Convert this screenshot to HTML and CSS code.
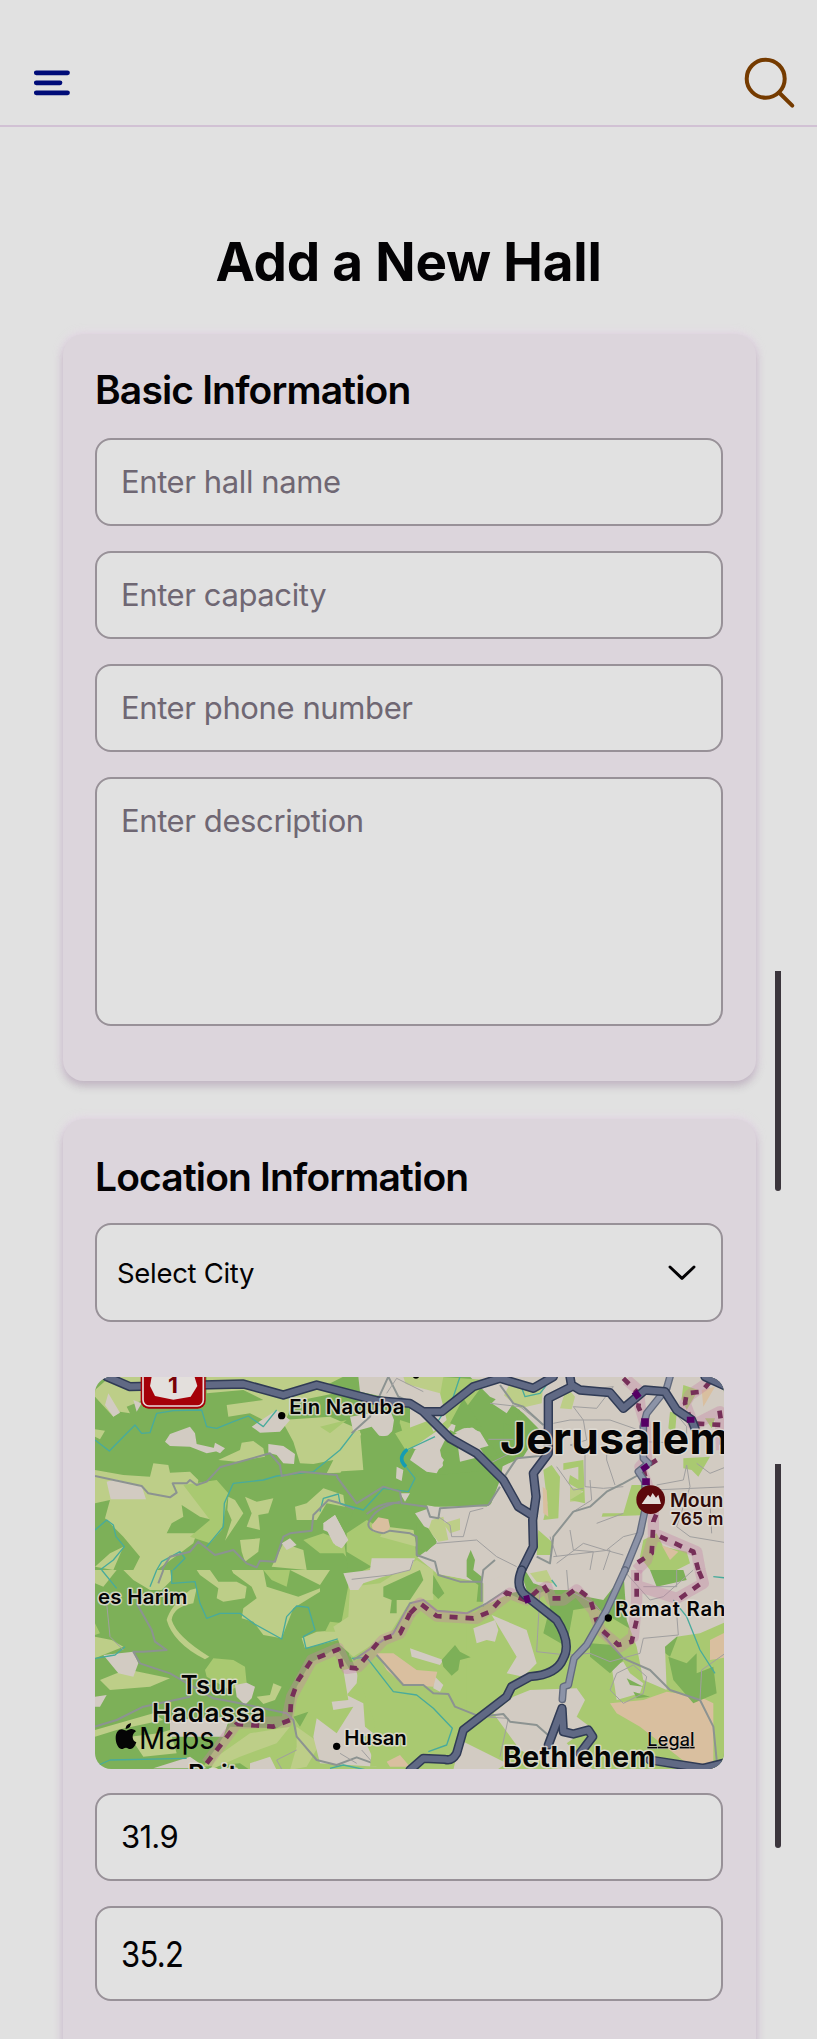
FILE: index.html
```html
<!DOCTYPE html>
<html lang="en">
<head>
<meta charset="utf-8">
<title>Add a New Hall</title>
<link rel="stylesheet" href="styles.css">
</head>
<body>
<div class="screen">
  <header class="topbar">
    <svg class="menu-icon" viewBox="0 0 36 26"><path d="M2.3 2.8H33.5M2.3 12.8H26M2.3 22.8H33.5"/></svg>
    <svg class="search-icon" viewBox="0 0 50 50"><circle cx="20.7" cy="20.7" r="19"/><path d="M34 34.5L47.3 47.6"/></svg>
  </header>
  <main class="content">
    <h1 class="title">Add a New Hall</h1>
    <section class="card basic">
      <h2 class="heading">Basic Information</h2>
      <div class="field"><span class="placeholder">Enter hall name</span></div>
      <div class="field"><span class="placeholder">Enter capacity</span></div>
      <div class="field"><span class="placeholder">Enter phone number</span></div>
      <div class="field area"><span class="placeholder">Enter description</span></div>
    </section>
    <section class="card location">
      <h2 class="heading">Location Information</h2>
      <div class="field select"><span>Select City</span>
        <svg class="chevron" viewBox="0 0 28 16"><path d="M2 2L14 13.4L26 2"/></svg>
      </div>
      <svg class="map" viewBox="15 21 1887 1176" preserveAspectRatio="none">
        <rect class="forest" x="0" y="0" width="1920" height="1220"/>
        <!-- north-west -->
        <g>
          <path class="pale" d="M350 20H700L735 70L610 95L575 180L520 150L480 130L415 140L410 105L520 90L460 60L350 70ZM15 60L60 20H160V90L110 110L120 130L90 125L70 140L15 80ZM15 178L45 182L30 208L15 200ZM575 150L720 140L800 175L820 200L805 250L820 305L710 310L730 270L670 282L630 280L610 215ZM385 270L450 240L455 218L490 213L520 235L525 260L440 275ZM15 300L100 315L180 320L190 280L235 285L240 308L300 305L325 330L320 370L360 410L368 450L330 440L275 405L280 440L245 460L230 490L320 490L310 520L270 550L200 600H130L150 560L100 500L45 445L60 390L15 400ZM415 380L435 390L460 430L430 475L405 512L425 450L412 420ZM465 380L500 395L550 385L535 430L505 435L510 480L470 470L485 430ZM615 410L650 400L700 355L760 375L765 410L710 400L680 450L620 450ZM450 510L510 505L505 545L465 575L455 545ZM545 590L580 520L640 540L650 600ZM15 590L60 550L100 530L70 600Z"/>
          <path class="mid" d="M280 345L380 330L415 370L395 480L360 520L300 500L360 450ZM640 510L700 490L800 530L900 480L960 520V600H800L760 550L690 550ZM930 150L960 160V220L925 210ZM690 170L770 150L720 190Z"/>
          <path class="land" d="M55 70L90 128L70 140L45 105ZM225 215L240 192L300 170L315 190L320 222L400 240L350 250L300 230L240 228ZM375 218L405 235L390 250L370 240ZM535 222L580 228L615 252L612 282L580 280L560 255L535 248ZM805 20H960V115L880 80L810 65ZM780 140L900 120L912 150L905 195L870 200L845 170L790 185ZM50 335L75 328L155 348L168 388L62 388ZM485 170L560 120L600 150L570 185L510 188ZM700 460L735 435L775 510L755 535L735 525L725 490L700 480ZM575 520L600 505L620 525L590 540ZM130 90L155 100L140 125ZM920 290L940 280V325L920 330Z"/>
          <path class="pale" d="M640 20H760L700 50Z"/>
          <path class="stream" d="M15 210L58 243L100 200L135 165L155 190L180 188L200 130L250 122L335 120L350 170L380 175L430 155L475 138L520 170L560 120M350 530L400 470L403 400L430 340L520 330L560 318L670 305L750 240L795 182M15 480L50 450L70 465L78 500L103 530L70 570L30 600M200 600L215 575L270 545L285 565L250 600M690 425L700 385L745 372L750 400"/>
          <path class="lane" d="M15 318L155 348L175 370L240 382L260 368L248 340L290 340L300 330L320 345L350 335L390 292L540 250L570 285L575 318L635 305L740 315L760 350L810 400M215 600L240 560L300 545L325 515L375 555L430 540L470 580L500 592L510 572L555 575L580 500L600 490L665 482L670 435L715 390L750 400L830 432M785 190L840 140L895 20L925 80L960 95"/>
        </g>
        <!-- south-west -->
        <g transform="translate(0 600)">
          <path class="pale" d="M15 0H80L40 50L15 40ZM100 0H240L245 30L215 60L180 60L130 30ZM320 0H360L385 35L440 35L470 50L465 85L400 95L380 85L385 55L330 15ZM425 0H520L530 50L625 80L690 55L690 65L610 115L575 205L520 195L490 155L455 145L460 115L500 85L485 50L430 10ZM600 0H720L690 45ZM230 150Q240 110 300 60L320 55L310 100Q250 110 245 150Q260 200 358 260L345 268Q250 220 230 150ZM15 200L65 210L100 230L15 265ZM30 330L80 310L120 300L240 325L180 350L60 360ZM500 380L540 375L550 340L575 350L555 390L520 402ZM780 0L900 20L880 60L870 110L900 135L870 190L840 220L780 260L765 205L645 235L635 205L680 185L750 180L785 120ZM15 480L190 430L220 450L80 480L15 500ZM205 490L240 480L260 550L160 560L120 500Z"/>
          <path class="mid" d="M660 280L740 235L780 300L840 260L900 330L960 370V600H480L450 580L340 590L420 470L560 475L605 450L620 350ZM345 300L370 265L430 270L465 290L470 340L420 360L350 320ZM520 0H600L590 50L545 30ZM15 160L30 190L15 195ZM720 155L760 160L740 185L705 185Z"/>
          <path class="pale" d="M380 560L480 490L600 470L560 520L450 560L360 600ZM620 470L690 520L650 590L600 600L620 530Z"/>
          <path class="forest" d="M610 440L655 425L630 470ZM300 530L350 500L370 520L330 550Z"/>
          <path class="land" d="M40 255L130 245L145 280L130 320L85 310ZM435 345L470 338L495 350L485 385L465 405L440 380ZM760 300L805 290L800 340L770 375L820 400L825 470L850 490L820 500L860 590L690 580L670 500L680 445L740 490L790 410L730 420L725 395L775 390ZM15 380L50 375L30 410L15 410ZM240 450L420 440L400 500L240 500ZM190 595L300 560L350 595ZM480 580L540 560L560 600H480Z"/>
          <path class="stream" d="M245 0V40L315 35L330 100L350 145L390 130L450 130L490 160L575 207L590 140L620 108L655 112L675 180L640 200L648 235L700 220L765 200L785 262M15 265L75 255L105 230M35 0L80 55M15 590L60 570L290 565M720 595L760 585L830 600M200 0L180 50"/>
          <path class="lane" d="M220 0L205 40M140 100L185 180L195 215L230 240L160 245L130 245L150 280L240 310L370 385L450 400L590 430L610 450L620 500L680 570L740 585L800 562L850 580L920 550L960 570M15 470L80 450L160 410L300 380"/>
          <path class="street" d="M50 100L60 200L100 240M750 550L800 580M815 540L850 580M560 570L620 540M560 570L575 597"/>
        </g>
        <!-- north-east ground -->
        <g transform="translate(960 0)">
          <path class="land" d="M0 20H960V600H0V420L75 400L230 410L270 370L275 290L340 260L390 180L340 130L290 90L250 120L160 200L120 180L90 240L100 290L60 310L30 290L40 250L0 230Z"/>
          <path class="forest" d="M85 20L180 20L240 80L330 120L315 170L280 160L280 250L200 260L280 275L265 370L250 400L75 410L30 400L0 430V270L20 290L45 305L90 300L110 270L95 250L130 245L190 250L210 190L170 170L130 190L150 120L100 110Z"/>
          <path class="pale" d="M300 40H400L395 100L330 115L280 80ZM470 50L495 80L485 118L450 115ZM480 350L515 360V392L480 395Z"/>
          <path class="land" d="M130 195L185 170L210 190L240 240L200 260L155 240ZM245 100L275 70L310 100L290 130ZM0 20H85L105 90L60 130L0 100Z"/>
          <path class="mid" d="M400 300L425 285L450 320L445 445L400 450L412 400ZM460 280L520 270L525 400L480 390L520 365L475 340L480 315L505 330L505 290L460 300ZM665 345L715 345L710 435L575 440L578 430L640 430ZM820 265L900 260L865 320L845 300L820 295ZM780 125L800 130L795 190L775 175ZM385 480L430 520L420 555L380 555ZM700 510L740 490L760 530L830 545L840 580L800 600H720L690 560ZM820 45L865 60L830 120L815 85ZM305 560H320V600H300ZM885 145L915 145L905 175Z"/>
          <path class="peach" d="M398 350L410 360L415 440L400 430ZM755 525L805 545L780 570ZM875 60L915 50L880 110Z"/>
        </g>
        <!-- south-east ground -->
        <g transform="translate(960 600)">
          <path class="mid" d="M0 80L90 110H220L270 60L340 90L410 60L420 110L400 190L470 230L490 120L550 110L700 200L780 260L830 130L960 110V600H0Z"/>
          <path class="land" d="M75 0H330L350 60L300 70L260 90L215 110L180 115L75 100L60 80V0ZM345 0H650L580 90L530 80L490 60L430 60L370 40ZM640 0H960V150L870 190L800 200L765 230L770 360L700 330L680 230L650 150ZM245 135L350 180L380 280L340 320L290 310L320 260ZM310 380L360 360L500 355L525 390L500 440L540 470L470 520L550 600H450L330 540L250 430ZM605 290L640 275L660 310L700 340L690 370L620 390ZM150 510L230 550L290 580L260 600H130Z"/>
          <path class="peach" d="M600 400L700 390L770 365L870 380L910 400V600L830 580L690 470L620 430ZM900 210L960 180V260L900 270Z"/>
          <path class="forest" d="M720 0H820L830 30L740 50ZM775 260L830 280L860 250L860 310L910 290L920 370L850 400L790 330ZM540 220L610 225L640 270L600 310L540 260ZM650 325L700 350L660 345ZM670 365L720 380L680 385Z"/>
          <path class="pale" d="M360 10L410 0L430 40L380 35Z"/>
        </g>
        <!-- valley between the forest and the city -->
        <g transform="translate(630 0)">
          <path class="forest" d="M185 190L260 200L300 160L320 230L350 320L580 300L595 370L570 405L420 412L380 405L410 520L300 600L150 640L130 500L170 400L110 330Z"/>
          <path class="mid" d="M285 190L390 150L415 180L320 245ZM140 490L200 450L270 490L340 480L350 560L410 610L550 640V700L500 745V1020L450 1180L330 1190H210L225 1060L160 880L120 780L150 620L215 590L140 545ZM390 125L415 20L560 30L500 110L440 180Z"/>
          <path class="pale" d="M150 650L240 640L350 570L400 600V690L360 690L320 710L270 790L160 860L120 825L100 770L145 740ZM260 470L340 480L350 530L240 500ZM100 305L190 300L180 180L130 240ZM310 20H430L420 75L330 85Z"/>
          <path class="land" d="M345 240L400 232L432 270L410 310L380 305L330 270ZM290 290L310 300L305 333L288 325ZM130 610L210 600L215 565L345 565L330 600L250 620L190 640L175 660H150ZM345 430L400 410H570L600 330L690 450L650 600L555 637L410 612L405 575L375 550L420 520L380 480ZM70 460L105 435L145 510L125 535L100 520ZM300 370L330 370L315 395ZM330 835L430 870L420 885L335 860ZM520 775L585 750L595 780L585 815L560 810L530 820ZM555 640L650 600L630 665L560 695ZM325 85L310 40L420 70L440 150L400 185L380 130ZM400 915L430 945L420 965L400 955ZM470 200L500 172L540 185L570 235L540 260L480 275Z"/>
          <path class="pale" d="M395 450L430 440L445 510L415 515L385 480ZM430 460L480 445V480L450 490Z"/>
          <path class="forest" d="M350 460L385 475L410 515L380 545L350 535ZM250 650L360 600L370 630L330 690H290V730H270L275 690L250 680ZM400 615L433 670L415 687L398 670ZM500 570L512 540L525 570L520 600L545 620V695H530L535 645L500 620ZM425 870L465 825L480 845L512 862L480 870L475 900L455 917L430 890ZM450 160L490 85L545 170L490 175ZM540 235L575 225L595 255L560 265Z"/>
          <path class="peach" d="M215 465L235 442L265 448L270 470L260 490L220 485ZM230 850H280L350 900L412 905L400 950L310 945L260 900ZM260 1175L300 1155L330 1190H270Z"/>
          <path class="street" d="M155 628L270 615L330 600L340 570M415 440L450 465L455 500L490 500L510 425L550 415M410 520L530 510L590 560L650 590M260 70L290 25L370 65M540 1040L625 1045L600 1160M565 208H640"/>
          <path class="stream" d="M405 200L320 240M310 280L345 325L325 365L250 355L190 420L120 400M155 865L200 862L280 965L350 975L400 1015L457 1075L440 1125L385 1145M480 20L460 80L410 160L430 180"/>
          <path class="river" d="M322 238Q290 265 318 290"/>
          <path class="lane" d="M110 320L170 400L250 350L300 365L305 400L380 410L390 440L415 445L420 415L565 405L600 350M200 432Q250 390 300 400M250 490Q190 480 210 450Q230 410 300 395M250 490L270 482L330 490L350 500V555L405 575L415 615L480 635H545L550 600L585 570M545 635V695M160 870L280 790L330 700L370 690L410 722L500 730L560 700L620 660M230 855L310 945H370L400 970L445 972L465 1010L540 1040"/>
        </g>
        <!-- regional boundary -->
        <g transform="translate(0 600)">
          <path class="boundary-bg" d="M350 580L440 460L590 455L605 380L665 270L745 235L770 295L805 290L880 210L930 190L960 130"/>
          <path class="boundary" d="M350 580L440 462L550 470L600 450L603 390L625 330L665 270L745 238L755 290L800 295L870 210L930 190L960 130"/>
        </g>
        <!-- north-east roads -->
        <g transform="translate(960 0)">
          <path class="stream" d="M330 40L345 80L390 70L430 20"/>
          <path class="street" d="M240 100L330 110L400 165M520 60L610 50L560 115L490 110L520 150L530 210L480 225L525 240V350L580 355L640 350M430 160L480 150L600 150L700 185M590 230V270L615 345M440 290L490 360L520 355M540 330L545 390L490 425M740 345L820 330L830 285L840 350L800 470L840 500L960 520M860 280L900 310L950 290M560 460L640 430M590 540L640 500L680 490M580 600L600 540L430 560M480 480L490 540L550 545L540 600M780 110L830 170V220L700 215M300 250L220 290M440 580L520 520L585 540L640 555M730 360L960 350M900 400L905 490M420 500L440 560"/>
          <path class="lane" d="M270 45L310 100L340 110L400 165M420 255L320 265L270 340M685 315L640 340L590 365L540 410L490 425L430 500L420 580L380 560"/>
          <path class="boundary-bg" d="M650 30L685 60L690 110L705 160L710 270L690 290L710 340L730 410V490L860 545L870 600M735 485L710 570L680 600M890 40L840 75L825 100L850 165L930 125L935 240"/>
          <path class="boundary" d="M640 25L690 75L685 110L705 155L708 215M740 270L700 295L710 340L740 430L730 455L728 500L725 550L680 580V600M750 500L850 545L865 600M900 35L875 65L830 70L825 100L845 160L935 165L925 100M935 200V250"/>
          <path class="minor-case" d="M780 20L770 55L710 130L700 170V265L715 280L685 305L705 335V420L690 490L645 600"/>
          <path class="minor" d="M780 20L770 55L710 130L700 170V265L715 280L685 305L705 335V420L690 490L645 600"/>
          <path class="major-case" d="M-910 20L-840 50L-500 42L-380 75L-280 45L-100 92L0 100L40 125L95 125L190 50L270 25L370 55L430 20M40 125L120 205L200 250L280 330L325 410L370 438M480 20L485 50L415 85V250L370 310L378 380L368 450L370 530L335 600M485 45L510 60L600 68L640 115L705 60L765 65L800 120L845 150L855 175M885 20L950 50"/>
          <path class="major" d="M-910 20L-840 50L-500 42L-380 75L-280 45L-100 92L0 100L40 125L95 125L190 50L270 25L370 55L430 20M40 125L120 205L200 250L280 330L325 410L370 438M480 20L485 50L415 85V250L370 310L378 380L368 450L370 530L335 600M485 45L510 60L600 68L640 115L705 60L765 65L800 120L845 150L855 175M885 20L950 50"/>
          <path class="crossing" d="M672 80L688 68M705 145V170M700 285L710 300M708 325V345M842 140V158"/>
        </g>
        <!-- south-east roads -->
        <g transform="translate(960 600)">
          <path class="lane" d="M575 190L640 265L720 300L780 360L870 390L910 470L920 570M210 440L280 432L300 455L380 465L420 500"/>
          <path class="street" d="M390 60L380 245L470 255L540 250L600 275L690 250L700 205L805 195L800 130M870 390L875 300L960 240M800 0V50L700 50M470 0L475 60L550 100L600 150M640 0L720 90L760 80L850 0M620 310L600 360L640 400L700 370L710 320L670 285L620 310"/>
          <path class="stream" d="M790 90L830 140L870 240L915 310M910 20L960 25M425 30L440 50"/>
          <path class="boundary-bg" d="M0 130L30 100L80 138L200 145L300 70L350 90L410 50L425 90H460L500 60L550 120L570 180L630 230L670 200L680 90V0M690 50L800 85L880 40L870 0"/>
          <path class="boundary" d="M0 130L30 100L80 138L190 145L240 125L290 68L350 92L400 45L425 85H460L500 55L540 85L565 170L625 225L665 215L680 150V0M810 85L880 35L865 0"/>
          <path class="minor-case" d="M645 0L590 120L530 225L492 265L475 345L460 350L457 388"/>
          <path class="minor" d="M645 0L590 120L530 225L492 265L475 345L460 350L457 388"/>
          <path class="major-case" d="M335 0Q315 50 345 75L440 150Q485 220 460 265Q440 315 360 320L305 350L290 380L160 480L140 550Q125 575 105 568L40 565L0 600M415 525L456 415L460 485L490 492L535 480L548 500L510 550M720 570L880 595L960 575"/>
          <path class="major" d="M335 0Q315 50 345 75L440 150Q485 220 460 265Q440 315 360 320L305 350L290 380L160 480L140 550Q125 575 105 568L40 565L0 600M415 525L456 415L460 485L490 492L535 480L548 500L510 550M720 570L880 595L960 575"/>
          <path class="crossing" d="M343 90L360 85"/>
        </g>
        <rect class="shield-edge" x="152" y="-60" width="195" height="176" rx="24"/>
        <rect class="shield" x="159" y="-55" width="181" height="163" rx="18"/>
        <path class="shield-face" d="M186 15H312L322 48L302 80L250 89L195 78L180 48Z"/>
        <circle class="peak" cx="1682" cy="389" r="43"/>
        <path class="summit" d="M1655 402L1674 374L1681 382L1688 369L1698 383L1705 374L1713 402Z"/>
        <g class="labels">
          <text class="route" x="234" y="70" textLength="30" lengthAdjust="spacingAndGlyphs">1</text>
          <circle cx="575" cy="137" r="11"/><circle cx="740" cy="1129" r="11"/><circle cx="1555" cy="744" r="11"/><circle cx="978" cy="16" r="10"/>
          <text class="town" x="598" y="133" textLength="345">Ein Naquba</text>
          <text class="town" x="24" y="701" textLength="268">es Harim</text>
          <text class="village" x="272" y="973" textLength="168">Tsur</text>
          <text class="village" x="186" y="1057" textLength="340">Hadassa</text>
          <text class="town" x="763" y="1125" textLength="187">Husan</text>
          <text class="town" x="1575" y="738" textLength="331">Ramat Rah</text>
          <text class="city" x="1230" y="251" textLength="690">Jerusalem</text>
          <text class="bethlehem" x="1239" y="1191" textLength="457">Bethlehem</text>
          <text class="village" x="294" y="1240" textLength="148">Beit</text>
          <text class="mount" x="1740" y="411" textLength="160">Moun</text>
          <text class="mount height" x="1742" y="464" textLength="158">765 m</text>
          <text class="legal" x="1672" y="1127" textLength="142">Legal</text>
          <text class="brand" x="147" y="1136" textLength="227" lengthAdjust="spacingAndGlyphs">Maps</text>
        </g>
        <path class="apple" d="M109 1082C114 1082 120 1075 128 1078Q136 1080 138 1084Q127 1091 128 1102Q129 1114 139 1117Q133 1136 121 1137C115 1137 113 1133 108 1133C102 1133 100 1137 94 1137C84 1136 77 1118 77 1104C77 1087 86 1078 95 1078C101 1078 104 1082 109 1082ZM107 1077Q106 1064 123 1059Q124 1074 107 1077Z"/>
      </svg>
      <div class="field value">31.9</div>
      <div class="field value tall"><span>35.2</span></div>
    </section>
  </main>
  <i class="scroll outer"></i>
  <i class="scroll inner"></i>
</div>
</body>
</html>
```
FILE: styles.css
```css
* { box-sizing: border-box; }
body { margin: 0; background: #e1e1e1; }
.screen {
  position: relative;
  width: 817px;
  height: 2039px;
  overflow: hidden;
  background: #e1e1e1;
  color: #030204;
  font-family: Inter, "Liberation Sans", sans-serif;
}
.topbar {
  display: flex;
  justify-content: space-between;
  align-items: flex-start;
  height: 127px;
  padding: 58px 22px 0 34px;
  border-bottom: 2px solid #d1c1d4;
}
.menu-icon { width: 36px; height: 26px; margin-top: 12px; fill: none; stroke: #000c78; stroke-width: 4.8; stroke-linecap: round; overflow: visible; }
.search-icon { width: 50px; height: 50px; fill: none; stroke: #753b00; stroke-width: 4; stroke-linecap: round; overflow: visible; }
.content { padding: 0 61px 0 63px; }
.title {
  height: 207px;
  margin: 0;
  padding: 103px 2px 0 0;
  font-size: 53px;
  line-height: 64px;
  font-weight: 700;
  letter-spacing: -.2px;
  text-align: center;
  white-space: nowrap;
}
.card {
  width: 693px;
  padding: 30px 33px 0 32px;
  border-radius: 21px;
  background: #dcd5dc;
  box-shadow: 0 5px 9px rgba(83, 62, 88, .25), 0 0 8px 2px rgba(231, 215, 232, .8);
}
.basic { height: 747px; margin-bottom: 38px; }
.location { height: 950px; padding-top: 32px; }
.heading {
  height: 74px;
  margin: 0;
  padding: 3px 0 0;
  font-size: 39px;
  line-height: 46px;
  font-weight: 600;
  letter-spacing: -.85px;
  white-space: nowrap;
}
.field {
  display: flex;
  align-items: center;
  width: 628px;
  height: 88px;
  margin-bottom: 25px;
  padding-left: 24px;
  border: 2px solid #989198;
  border-radius: 16px;
  background: #e1e1e1;
  font-size: 31px;
  line-height: 38px;
  white-space: nowrap;
}
.placeholder { color: #6f6773; letter-spacing: -.4px; }
.area { height: 249px; align-items: flex-start; padding-top: 23px; }
.select { justify-content: space-between; height: 99px; margin-top: -2px; margin-bottom: 55px; padding: 0 25px 0 20px; font-size: 27.5px; letter-spacing: -.3px; }
.chevron { width: 28px; height: 16px; fill: none; stroke: #030204; stroke-width: 2.9; stroke-linecap: round; stroke-linejoin: round; }
.map { display: block; width: 629px; height: 392px; margin-bottom: 24px; border-radius: 16px; overflow: hidden; }
.value { letter-spacing: -.7px; }
.tall { height: 95px; }
.tall span { transform: scaleY(1.16); }
.scroll { position: absolute; left: 775px; width: 6px; background: #3b353c; border-radius: 0 0 3px 3px; }
.outer { top: 971px; height: 220px; }
.inner { top: 1464px; height: 384px; }

.forest { fill: #7db058; }
.mid { fill: #a9c971; }
.pale { fill: #bdce88; }
.land { fill: #d2cbc2; }
.peach { fill: #d9bf9f; }
.stream, .river, .lane, .street, .boundary, .boundary-bg, .major, .major-case, .minor, .minor-case, .crossing { fill: none; stroke-linejoin: round; }
.stream { stroke: #48ab9c; stroke-width: 4; }
.river { stroke: #159db2; stroke-width: 11; }
.lane { stroke: #8c9391; stroke-width: 6; }
.street { stroke: #a09f9f; stroke-width: 3; }
.boundary-bg { stroke: rgba(199, 129, 166, .35); stroke-width: 34; }
.boundary { stroke: #762f58; stroke-width: 14; stroke-dasharray: 24 24; }
.crossing { stroke: #550064; stroke-width: 23; }
.major, .major-case, .minor, .minor-case { stroke-linecap: round; }
.major-case { stroke: #303b55; stroke-width: 28; }
.major { stroke: #606984; stroke-width: 19; }
.minor-case { stroke: #626a7d; stroke-width: 23; }
.minor { stroke: #8c93a7; stroke-width: 15; }
.shield-edge { fill: #a50008; }
.shield { fill: #a50008; stroke: #e7dada; stroke-width: 5; }
.shield-face { fill: #e3dfdc; }
.peak { fill: #5d080c; }
.summit { fill: #e2dcd9; }
.labels text { fill: #050505; stroke: rgba(225, 221, 214, .85); stroke-width: 9px; stroke-linejoin: round; paint-order: stroke; }
.labels .town { font-size: 61px; font-weight: 600; }
.labels .village { font-size: 77px; font-weight: 600; }
.labels .city { font-size: 133px; font-weight: 700; }
.labels .bethlehem { font-size: 85px; font-weight: 700; }
.labels .mount { font-size: 58px; font-weight: 600; fill: #2d0b08; }
.labels .height { font-size: 52px; }
.labels .legal { font-size: 54px; font-weight: 500; text-decoration: underline; stroke-width: 3px; }
.labels .brand { font-size: 91px; font-weight: 400; stroke: none; }
.labels .route { font-size: 65px; font-weight: 700; fill: #790008; stroke: none; }
.apple { fill: #050505; }
```
